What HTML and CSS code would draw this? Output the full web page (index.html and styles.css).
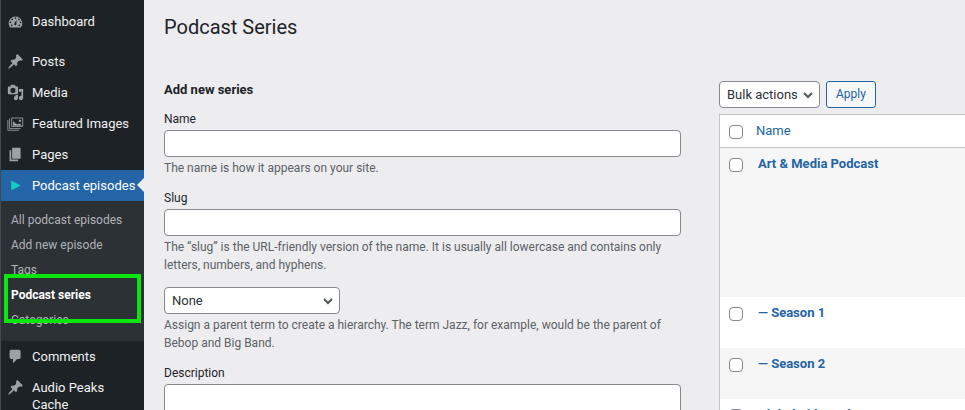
FILE: index.html
```html
<!DOCTYPE html>
<html lang="en">
<head>
    <meta charset="utf-8">
    <title>Podcast Series</title>
    <link rel="stylesheet" href="styles.css">
</head>
<body>
    <svg class="sprite" aria-hidden="true">
        <symbol id="icon-pin" viewBox="0 0 20 20">
            <path d="M10.44 3.02l1.82-1.82 6.36 6.35-1.83 1.82c-1.05-.68-2.48-.57-3.41.36l-.75.75c-.92.93-1.04 2.35-.35 3.41l-1.83 1.82-2.41-2.41-2.8 2.79c-.42.42-3.38 2.71-3.8 2.29s1.86-3.39 2.28-3.81l2.79-2.79L4.1 9.36l1.83-1.82c1.05.69 2.48.57 3.4-.36l.75-.75c.93-.92 1.05-2.35.36-3.41z"/>
        </symbol>
    </svg>

    <nav id="adminMenu">
        <ul class="menu">
            <li class="menu-item">
                <a href="#">
                    <svg viewBox="0 0 20 20"><path fill-rule="evenodd" d="M3.76 17h12.48c1.1-1.37 1.76-3.11 1.76-5 0-4.42-3.58-8-8-8s-8 3.58-8 8c0 1.89.66 3.63 1.76 5zM10 5a1 1 0 1 1 0 2 1 1 0 0 1 0-2zM6 6.5a1 1 0 1 1 0 2 1 1 0 0 1 0-2zM14 6.5a1 1 0 1 1 0 2 1 1 0 0 1 0-2zM11.23 7.92l-.1 5.33c-.05.56-.5 1.25-1.13 1.25a1.5 1.5 0 0 1-1.38-2.1zM4 10a1 1 0 1 1 0 2 1 1 0 0 1 0-2zM16 10a1 1 0 1 1 0 2 1 1 0 0 1 0-2zM5.5 13.5a1 1 0 1 1 0 2 1 1 0 0 1 0-2zM14.5 13.5a1 1 0 1 1 0 2 1 1 0 0 1 0-2z"/></svg>
                    <span>Dashboard</span>
                </a>
            </li>
            <li class="menu-item separated">
                <a href="#">
                    <svg><use href="#icon-pin"/></svg>
                    <span>Posts</span>
                </a>
            </li>
            <li class="menu-item">
                <a href="#">
                    <svg viewBox="0 0 20 20"><path fill-rule="evenodd" d="M13 11V4c0-.55-.45-1-1-1h-1.67L9 1H5L3.67 3H2c-.55 0-1 .45-1 1v7c0 .55.45 1 1 1h10c.55 0 1-.45 1-1zM7 4.5a3 3 0 1 1 0 6 3 3 0 0 1 0-6zM14 6h5v10.5a2.5 2.5 0 1 1-2-2.45V9h-3zM10 13h3v3.5a2.5 2.5 0 1 1-3-2.45z"/></svg>
                    <span>Media</span>
                </a>
            </li>
            <li class="menu-item">
                <a href="#">
                    <svg viewBox="0 0 20 20"><path class="line" d="M1 6v12h13M3 4v12h13M5.5 3.5h13v10h-13z"/><path d="M7 12.5V7l3 3 2 1 2-1 3 1.5v1zM14 5.5h2.5v2.5H14z"/></svg>
                    <span>Featured Images</span>
                </a>
            </li>
            <li class="menu-item">
                <a href="#">
                    <svg viewBox="0 0 20 20"><path d="M6 15V2h10v13H6zm-1 1h8v2H3V5h2v11z"/></svg>
                    <span>Pages</span>
                </a>
            </li>
            <li class="menu-item current">
                <a href="#">
                    <svg viewBox="0 0 20 20"><path d="M5 4l11 6-11 6z"/></svg>
                    <span>Podcast episodes</span>
                </a>
                <ul class="submenu">
                    <li><a href="#">All podcast episodes</a></li>
                    <li><a href="#">Add new episode</a></li>
                    <li><a href="#">Tags</a></li>
                    <li class="marked"><a href="#" class="active">Podcast series</a></li>
                    <li><a href="#">Categories</a></li>
                </ul>
            </li>
            <li class="menu-item">
                <a href="#">
                    <svg viewBox="0 0 20 20"><path d="M5 2h9c1.1 0 2 .9 2 2v7c0 1.1-.9 2-2 2h-2l-5 5v-5H5c-1.1 0-2-.9-2-2V4c0-1.1.9-2 2-2z"/></svg>
                    <span>Comments</span>
                </a>
            </li>
            <li class="menu-item">
                <a href="#">
                    <svg><use href="#icon-pin"/></svg>
                    <span>Audio Peaks Cache</span>
                </a>
            </li>
        </ul>
    </nav>

    <main>
        <h1>Podcast Series</h1>

        <div class="columns">
            <form class="add-form">
                <h2>Add new series</h2>
                <div class="field">
                    <label for="seriesName">Name</label>
                    <input id="seriesName" type="text" aria-describedby="nameHelp">
                    <p id="nameHelp">The name is how it appears on your site.</p>
                </div>
                <div class="field">
                    <label for="seriesSlug">Slug</label>
                    <input id="seriesSlug" type="text" aria-describedby="slugHelp">
                    <p id="slugHelp">The “slug” is the URL-friendly version of the name. It is usually all lowercase and contains only letters, numbers, and hyphens.</p>
                </div>
                <div class="field">
                    <div class="select parent">
                        <select aria-label="Parent" aria-describedby="parentHelp">
                            <option>None</option>
                        </select>
                        <svg viewBox="0 0 12 12"><path d="M2 4l4 4 4-4"/></svg>
                    </div>
                    <p id="parentHelp">Assign a parent term to create a hierarchy. The term Jazz, for example, would be the parent of Bebop and Big Band.</p>
                </div>
                <div class="field">
                    <label for="seriesDescription">Description</label>
                    <textarea id="seriesDescription" rows="5"></textarea>
                </div>
            </form>

            <section class="series-list">
                <div class="bulk">
                    <div class="select">
                        <select aria-label="Bulk actions">
                            <option>Bulk actions</option>
                        </select>
                        <svg viewBox="0 0 12 12"><path d="M2 4l4 4 4-4"/></svg>
                    </div>
                    <button type="button">Apply</button>
                </div>
                <table>
                    <thead>
                        <tr>
                            <td class="check"><input type="checkbox" aria-label="Select all"></td>
                            <th><a href="#">Name</a></th>
                        </tr>
                    </thead>
                    <tbody>
                        <tr class="with-description">
                            <td class="check"><input type="checkbox" aria-label="Select Art &amp; Media Podcast"></td>
                            <td><a href="#">Art &amp; Media Podcast</a></td>
                        </tr>
                        <tr>
                            <td class="check"><input type="checkbox" aria-label="Select Season 1"></td>
                            <td><a href="#">— Season 1</a></td>
                        </tr>
                        <tr>
                            <td class="check"><input type="checkbox" aria-label="Select Season 2"></td>
                            <td><a href="#">— Season 2</a></td>
                        </tr>
                        <tr>
                            <td class="check"><input type="checkbox" aria-label="Select Global Kids Podcast"></td>
                            <td><a href="#">Global Kids Podcast</a></td>
                        </tr>
                    </tbody>
                </table>
            </section>
        </div>
    </main>
</body>
</html>
```
FILE: styles.css
```css
* {
    box-sizing: border-box;
}

body {
    display: flex;
    height: 100vh;
    margin: 0;
    overflow: hidden;
    background-color: #ededf0;
    color: #1d2327;
    font-family: Roboto, "Liberation Sans", sans-serif;
    font-size: 12px;
    line-height: 17px;
}

a {
    color: #2464a4;
    text-decoration: none;
}

h1, h2, p, ul {
    margin: 0;
    padding: 0;
}

ul {
    list-style: none;
}

.sprite {
    display: none;
}

#adminMenu {
    flex: 0 0 144px;
    border-left: 1px solid #44494d;
    background-color: #1d2226;
}

.menu {
    padding-top: 6px;
}

.menu-item > a {
    display: flex;
    gap: 8px;
    padding: 7px 8px 7px 6px;
    color: #f0f0f1;
    font-size: 13px;
}

    .menu-item > a svg {
        flex: none;
        width: 17px;
        height: 17px;
        fill: #9ca1a6;
    }

    .menu-item .line {
        fill: none;
        stroke: #9ca1a6;
    }

.separated {
    margin-top: 9px;
}

.current > a {
    position: relative;
    background-color: #2465a8;
    color: #fff;
    white-space: nowrap;
}

    .current > a svg {
        fill: #12cfc0;
    }

    .current > a::after {
        content: "";
        position: absolute;
        top: 8px;
        right: 0;
        border: 7px solid transparent;
        border-left-width: 0;
        border-right-color: #ededf0;
    }

.submenu {
    padding: 7px 0 8px;
    background-color: #2c3136;
}

    .submenu a {
        display: block;
        padding: 4px 0 4px 10px;
        color: #afb3b7;
    }

    .submenu .active {
        color: #fff;
        font-weight: 700;
    }

.marked {
    position: relative;
}

    .marked::after {
        content: "";
        position: absolute;
        inset: -9px 3px -15px 3px;
        border: 4px solid #0be60f;
        pointer-events: none;
    }

main {
    flex: 1;
    min-width: 0;
    padding: 14px 0 0 20px;
}

h1 {
    font-size: 20px;
    font-weight: 400;
    line-height: 26px;
}

.columns {
    display: flex;
    align-items: flex-start;
    gap: 38px;
    margin-top: 41px;
}

.add-form {
    flex: 0 1 517px;
}

h2 {
    margin-bottom: 13px;
    font-size: 13px;
    font-weight: 700;
    line-height: 17px;
}

.field {
    margin-bottom: 13px;
}

    .field label {
        display: block;
        margin-bottom: 2px;
    }

    .field p {
        margin-top: 2px;
        color: #5c6166;
        line-height: 18px;
    }

input[type="text"], textarea, select {
    display: block;
    width: 100%;
    height: 27px;
    border: 1px solid #85888c;
    border-radius: 4px;
    background-color: #fff;
    color: #2c3338;
    font: inherit;
}

textarea {
    height: 90px;
    resize: none;
}

.select {
    position: relative;
}

    .select select {
        appearance: none;
        padding: 0 21px 0 7px;
        font-size: 13px;
    }

    .select svg {
        position: absolute;
        top: 8px;
        right: 6px;
        width: 12px;
        height: 12px;
        fill: none;
        stroke: #50575e;
        stroke-width: 2;
        pointer-events: none;
    }

.parent {
    width: 176px;
}

.series-list {
    flex: 1;
    min-width: 0;
}

.bulk {
    display: flex;
    gap: 6px;
    margin-bottom: 6px;
}

    .bulk button {
        height: 27px;
        padding: 0 9px;
        border: 1px solid #2464a4;
        border-radius: 3px;
        background-color: #f6f7f7;
        color: #2464a4;
        font: inherit;
    }

table {
    width: 100%;
    border: 1px solid #c3c4c7;
    border-right: none;
    border-spacing: 0;
    background-color: #fff;
}

td, th {
    height: 51px;
    padding: 7px 8px;
    font-size: 13px;
    font-weight: 700;
    text-align: left;
    vertical-align: top;
}

thead td, thead th {
    height: 33px;
    padding-left: 6px;
    border-bottom: 1px solid #c3c4c7;
    font-weight: 400;
}

tbody tr:nth-child(odd) {
    background-color: #f6f6f6;
}

.with-description td {
    height: 149px;
}

.check, thead .check {
    width: 30px;
    padding: 10px 0 0 9px;
}

input[type="checkbox"] {
    display: block;
    appearance: none;
    width: 14px;
    height: 14px;
    margin: 0;
    border: 1px solid #85888c;
    border-radius: 4px;
    background-color: #fff;
}
```
